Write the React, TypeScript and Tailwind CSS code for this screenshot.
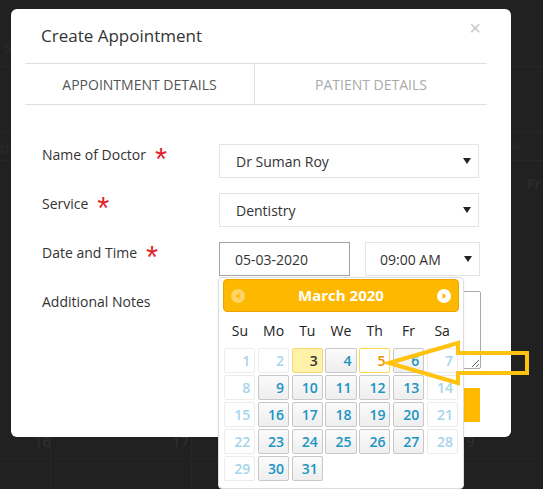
import React from 'react'

type DayKind = 'off' | 'on' | 'today' | 'active'

const weekDays = ['Su', 'Mo', 'Tu', 'We', 'Th', 'Fr', 'Sa']

const dayKind = (n: number): DayKind => {
    if (n === 3) return 'today'
    if (n === 5) return 'active'
    const col = (n - 1) % 7
    if (n < 3 || col === 0 || col === 6) return 'off'
    return 'on'
}

const cellStyles: Record<DayKind, string> = {
    off: 'border-[#ececec] bg-white text-[#a6d4ea]',
    on: 'border-[#c8c8c8] bg-gradient-to-b from-[#fbfbfb] to-[#eeeeee] text-[#1c94c4]',
    today: 'border-[#f6d773] bg-[#fff1a8] text-[#363636]',
    active: 'border-[#fbd850] bg-white text-[#eb8f00]',
}

const Caret = () => (
    <svg width="8" height="6" viewBox="0 0 8 6" className="absolute right-[7px] top-1/2 -translate-y-1/2">
        <path d="M0 0 H8 L4 6 Z" fill="#222" />
    </svg>
)

const Required = () => (
    <span className="ml-[9px] inline-block h-5 font-['Liberation_Sans'] text-[31px] leading-[30px] text-[#e2232b]">*</span>
)

const FieldLabel = ({ text, required }: { text: string; required?: boolean }) => (
    <div className="flex h-5 w-[177px] items-start text-[14px] leading-5 text-[#333]">
        <span>{text}</span>
        {required && <Required />}
    </div>
)

const SelectBox = ({ value, width, padLeft }: { value: string; width: string; padLeft: string }) => (
    <div className={`relative flex h-[34px] items-center border border-[#e4e4e4] text-[14px] text-[#333] ${width} ${padLeft}`}>
        {value}
        <Caret />
    </div>
)

const NavCircle = ({ dir, faded }: { dir: 'prev' | 'next'; faded?: boolean }) => (
    <svg width="14" height="14" viewBox="0 0 14 14" className={faded ? 'opacity-40' : ''}>
        <circle cx="7" cy="7" r="7" fill="#fff" />
        {dir === 'prev' ? <path d="M8.5 4 L4.8 7 L8.5 10 Z" fill="#ffb600" /> : <path d="M5.5 4 L9.2 7 L5.5 10 Z" fill="#ffb600" />}
    </svg>
)

const DatePicker = () => (
    <div className="absolute left-[218px] top-[277px] h-[212px] w-[246px] rounded-[4px] border border-[#dcdcdc] bg-white px-[4px] pt-[1px] shadow-[0_2px_2px_rgba(0,0,0,0.08)]">
        <div className="flex h-[33px] items-center justify-between rounded-[4px] border border-[#eea400] bg-[#ffb800] px-[7px] font-['Open_Sans'] text-white">
            <NavCircle dir="prev" faded />
            <span className="text-[15px] font-bold">March 2020</span>
            <NavCircle dir="next" />
        </div>
        <div className="grid h-[36px] w-[236px] grid-cols-7 items-center text-center text-[14px] text-[#222]">
            {weekDays.map((d) => (
                <span key={d}>{d}</span>
            ))}
        </div>
        <div className="grid w-[235px] grid-cols-7 gap-x-[2.6px] gap-y-[2px] pl-[1px]">
            {Array.from({ length: 31 }, (_, i) => i + 1).map((n) => {
                const kind = dayKind(n)
                return (
                    <div
                        key={n}
                        className={`flex h-[25px] items-center justify-end rounded-[2px] border pr-[4px] text-[14px] font-semibold ${cellStyles[kind]}`}
                    >
                        {n}
                    </div>
                )
            })}
        </div>
    </div>
)

// dimmed page sitting behind the modal overlay
const Backdrop = () => (
    <div className="absolute inset-0 bg-[#212121] font-['Open_Sans'] text-[#2b2b2b]">
        <div className="absolute left-0 right-0 top-[66px] h-px bg-[#272727]" />
        <div className="absolute left-0 right-0 top-[132px] h-px bg-[#272727]" />
        <div className="absolute left-0 right-0 top-[160px] h-px bg-[#272727]" />
        <div className="absolute left-0 right-0 top-[458px] h-px bg-[#252525]" />
        <div className="absolute bottom-0 left-[50px] top-[437px] w-px bg-[#262626]" />
        <div className="absolute bottom-0 left-[191px] top-[437px] w-px bg-[#262626]" />
        <span className="absolute left-[4px] top-[36px] text-[15px]">S</span>
        <span className="absolute left-0 top-[137px] text-[15px]">th</span>
        <span className="absolute left-[512px] top-[133px] text-[15px]">a</span>
        <span className="absolute left-[527px] top-[173px] text-[14px] font-bold">Fr</span>
        <span className="absolute left-[34px] top-[430px] text-[15px] text-[#313131]">16</span>
        <span className="absolute left-[172px] top-[430px] text-[15px] text-[#313131]">17</span>
        <span className="absolute left-[466px] top-[430px] text-[15px] text-[#313131]">9</span>
    </div>
)

const Pointer = () => (
    <svg className="absolute left-0 top-0" width="543" height="489" viewBox="0 0 543 489">
        <path
            d="M389 363 L458 343 L458 353 L527 353 L527 373 L458 373 L458 383 Z"
            fill="none"
            stroke="#ffc20e"
            strokeWidth="4"
            strokeLinejoin="miter"
        />
    </svg>
)

export default function App() {
    return (
        <div className="relative h-[489px] w-[543px] overflow-hidden font-['Open_Sans'] text-[#333]">
            <Backdrop />
            <div className="relative ml-[11px] mt-[9px] h-[428px] w-[500px] rounded-[6px] bg-white">
                <div className="relative flex h-[54px] items-center pl-[30px]">
                    <h1 className="text-[17px] text-[#333]">Create Appointment</h1>
                    <span className="absolute right-[30px] top-[9px] font-['Liberation_Sans'] text-[20px] leading-5 text-[#c8c8c8]">×</span>
                </div>
                <div className="ml-[14px] flex h-[42px] w-[462px] border-y border-[#dedede] text-[14px]">
                    <div className="flex w-[230px] items-center justify-center border-r border-[#dedede] text-[#555]">APPOINTMENT DETAILS</div>
                    <div className="flex flex-1 items-center justify-center text-[#aaa]">PATIENT DETAILS</div>
                </div>
                <div className="flex flex-col gap-[15px] pl-[31px] pt-[39px]">
                    <div className="flex items-start">
                        <div className="pt-px"><FieldLabel text="Name of Doctor" required /></div>
                        <SelectBox value="Dr Suman Roy" width="w-[260px]" padLeft="pl-[16px]" />
                    </div>
                    <div className="flex items-start">
                        <div className="pt-px"><FieldLabel text="Service" required /></div>
                        <SelectBox value="Dentistry" width="w-[260px]" padLeft="pl-[16px]" />
                    </div>
                    <div className="flex items-start">
                        <div className="pt-px"><FieldLabel text="Date and Time" required /></div>
                        <div className="flex h-[34px] w-[131px] items-center border border-[#a3a3a3] pl-[15px] text-[14px]">05-03-2020</div>
                        <div className="ml-[15px]">
                            <SelectBox value="09:00 AM" width="w-[115px]" padLeft="pl-[14px]" />
                        </div>
                    </div>
                    <div className="flex items-start">
                        <div className="pt-px"><FieldLabel text="Additional Notes" /></div>
                        <textarea className="h-[78px] w-[262px] rounded-[2px] border border-[#a9a9a9] p-2 text-[14px] outline-none" defaultValue="" />
                    </div>
                </div>
                <div className="mr-[31px] mt-[19px] flex justify-end">
                    <button className="h-[34px] w-[100px] bg-[#ffb900]" aria-label="Save" />
                </div>
            </div>
            <DatePicker />
            <Pointer />
        </div>
    )
}
